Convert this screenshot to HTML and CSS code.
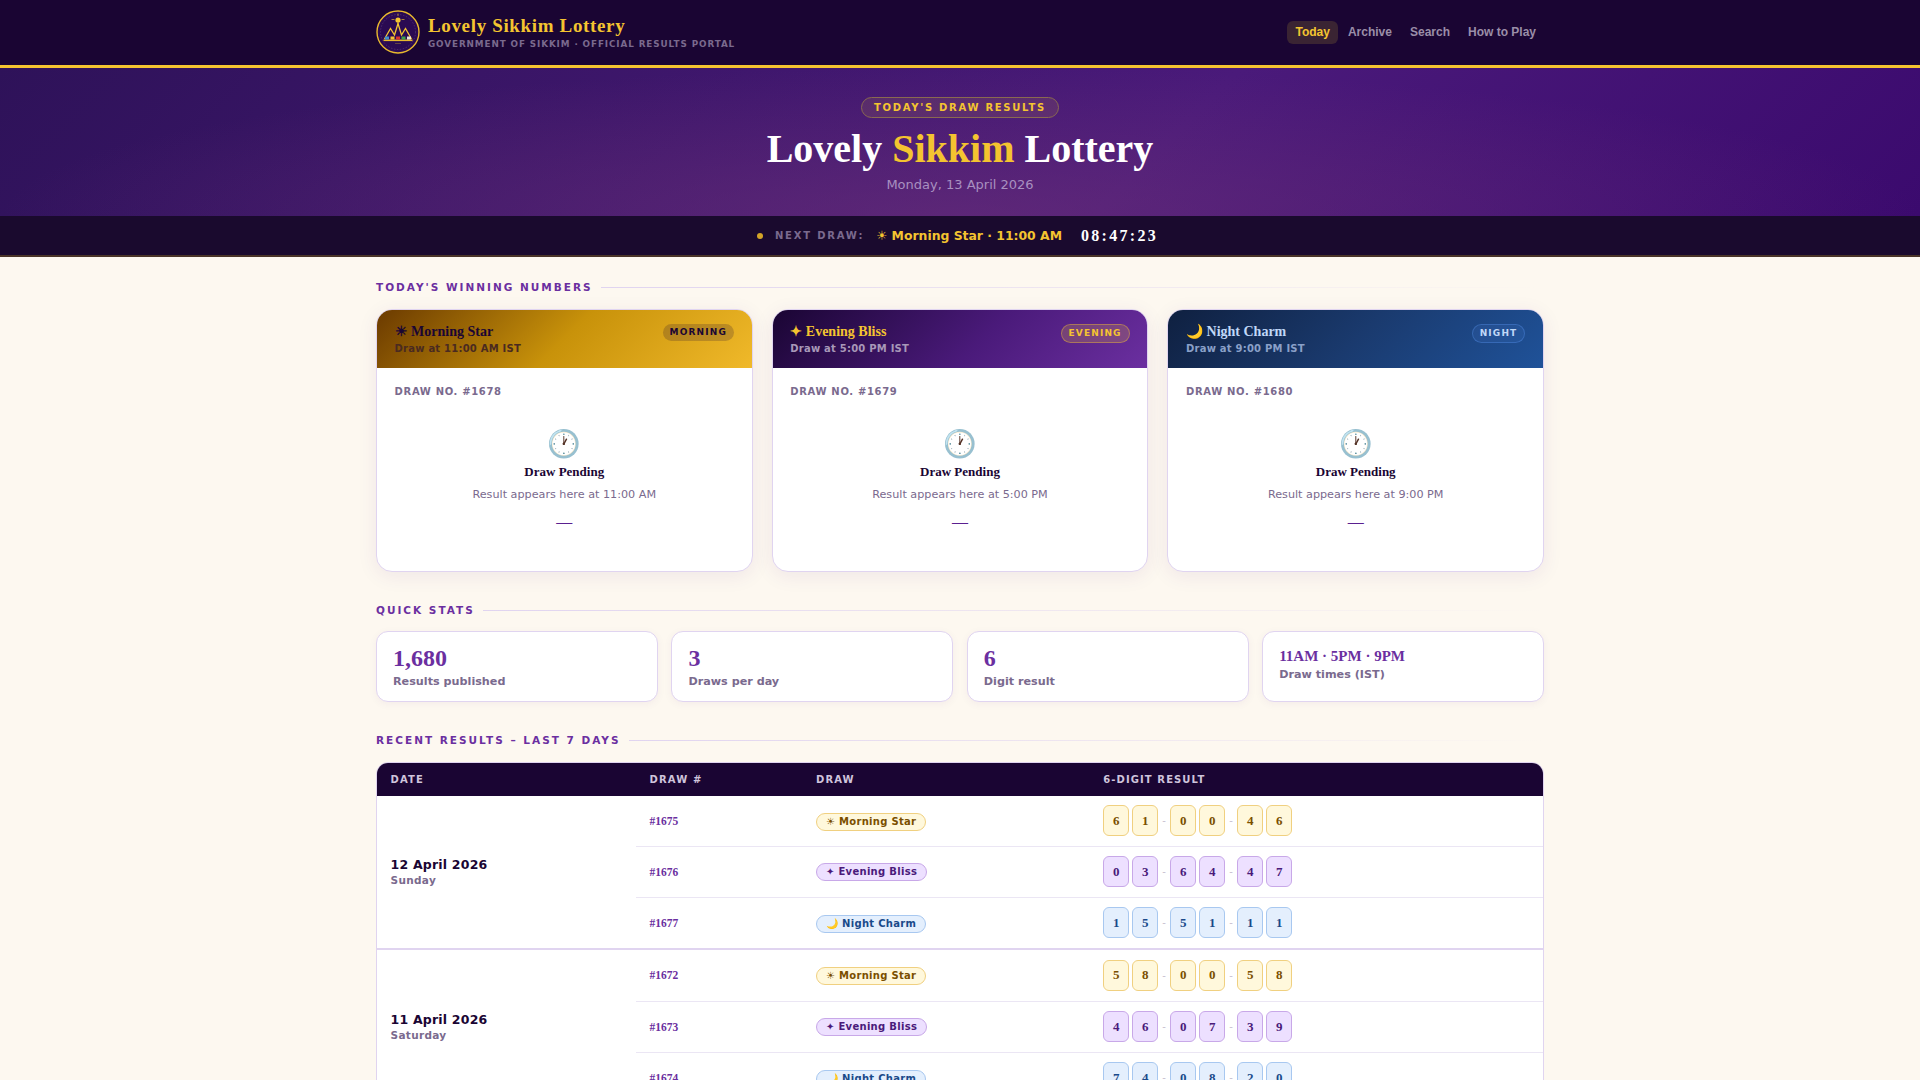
FILE: index.html
```html
<!DOCTYPE html>
<html lang="en">
<head>
<meta charset="utf-8">
<title>Lovely Sikkim Lottery</title>
<link rel="stylesheet" href="styles.css">
</head>
<body>
<header class="site-header">
  <div class="wrap header-row">
    <a class="brand">
      <svg class="logo" viewBox="0 0 44 44" width="44" height="44" aria-hidden="true">
        <circle cx="22" cy="22" r="21" fill="#2a0a52" stroke="#e8b92e" stroke-width="1.4"/>
        <circle cx="22" cy="22" r="17.5" fill="none" stroke="#6b4a8a" stroke-width=".5" stroke-dasharray="1.5 1.5"/>
        <circle cx="22" cy="10" r="2.6" fill="#f4c430"/>
        <path d="M22 3.500v2.500M15.500 9.500h3M25.500 9.500h3M22 12v2" stroke="#c9a030" stroke-width=".8" fill="none"/>
        <path d="M8.500 29 14.500 18.500 18.500 25 22 13.500 25.500 25 29.500 18.500 35.500 29" fill="none" stroke="#f4c430" stroke-width="1.3"/>
        <rect x="7.500" y="29.500" width="29" height="1.600" fill="#e8b92e"/>
        <rect x="9" y="26.500" width="4" height="3" fill="#3f8fd2"/>
        <rect x="14.500" y="26.500" width="4" height="3" fill="#f4c430"/>
        <rect x="20" y="26.500" width="4" height="3" fill="#d8342c"/>
        <rect x="25.500" y="26.500" width="4" height="3" fill="#3fa14a"/>
        <rect x="31" y="26.500" width="4" height="3" fill="#e9e4dc"/>
        <path d="M19 33.500h6" stroke="#8a6a3a" stroke-width=".6"/>
      </svg>
      <span class="brand-text">
        <span class="brand-name">Lovely Sikkim Lottery</span>
        <span class="brand-sub">GOVERNMENT OF SIKKIM · OFFICIAL RESULTS PORTAL</span>
      </span>
    </a>
    <nav class="nav">
      <a class="nav-link is-active">Today</a>
      <a class="nav-link">Archive</a>
      <a class="nav-link">Search</a>
      <a class="nav-link">How to Play</a>
    </nav>
  </div>
</header>

<section class="hero">
  <span class="hero-badge">TODAY'S DRAW RESULTS</span>
  <h1 class="hero-title">Lovely <span class="gold">Sikkim</span> Lottery</h1>
  <p class="hero-date">Monday, 13 April 2026</p>
</section>

<div class="next-bar">
  <span class="dot"></span>
  <span class="next-label">NEXT DRAW:</span>
  <span class="next-name">☀ Morning Star · 11:00 AM</span>
  <span class="next-time">08:47:23</span>
</div>

<main class="wrap main">
  <h2 class="section-title"><span>TODAY'S WINNING NUMBERS</span></h2>
  <div class="cards">
    <article class="card">
      <div class="card-head head-morning">
        <div>
          <div class="card-name">☀ Morning Star</div>
          <div class="card-time">Draw at 11:00 AM IST</div>
        </div>
        <span class="tag tag-morning">MORNING</span>
      </div>
      <div class="card-body">
        <div class="draw-no">DRAW NO. #1678</div>
        <div class="pending">
          <div class="clock">🕐</div>
          <div class="pending-title">Draw Pending</div>
          <div class="pending-sub">Result appears here at 11:00 AM</div>
          <div class="pending-dash">—</div>
        </div>
      </div>
    </article>
    <article class="card">
      <div class="card-head head-evening">
        <div>
          <div class="card-name name-evening">✦ Evening Bliss</div>
          <div class="card-time time-evening">Draw at 5:00 PM IST</div>
        </div>
        <span class="tag tag-evening">EVENING</span>
      </div>
      <div class="card-body">
        <div class="draw-no">DRAW NO. #1679</div>
        <div class="pending">
          <div class="clock">🕐</div>
          <div class="pending-title">Draw Pending</div>
          <div class="pending-sub">Result appears here at 5:00 PM</div>
          <div class="pending-dash">—</div>
        </div>
      </div>
    </article>
    <article class="card">
      <div class="card-head head-night">
        <div>
          <div class="card-name name-night">🌙 Night Charm</div>
          <div class="card-time time-night">Draw at 9:00 PM IST</div>
        </div>
        <span class="tag tag-night">NIGHT</span>
      </div>
      <div class="card-body">
        <div class="draw-no">DRAW NO. #1680</div>
        <div class="pending">
          <div class="clock">🕐</div>
          <div class="pending-title">Draw Pending</div>
          <div class="pending-sub">Result appears here at 9:00 PM</div>
          <div class="pending-dash">—</div>
        </div>
      </div>
    </article>
  </div>

  <h2 class="section-title"><span>QUICK STATS</span></h2>
  <div class="stats">
    <div class="stat"><div class="stat-value">1,680</div><div class="stat-label">Results published</div></div>
    <div class="stat"><div class="stat-value">3</div><div class="stat-label">Draws per day</div></div>
    <div class="stat"><div class="stat-value">6</div><div class="stat-label">Digit result</div></div>
    <div class="stat"><div class="stat-value stat-small">11AM · 5PM · 9PM</div><div class="stat-label">Draw times (IST)</div></div>
  </div>

  <h2 class="section-title"><span>RECENT RESULTS – LAST 7 DAYS</span></h2>
  <div class="table-box">
    <table class="results">
      <colgroup><col class="c-date"><col class="c-no"><col class="c-draw"><col></colgroup>
      <thead>
        <tr><th>DATE</th><th>DRAW #</th><th>DRAW</th><th>6-DIGIT RESULT</th></tr>
      </thead>
      <tbody class="day">
        <tr>
          <td class="date-cell" rowspan="3"><div class="date-main">12 April 2026</div><div class="date-day">Sunday</div></td>
          <td class="no">#1675</td>
          <td><span class="pill pill-m">☀ Morning Star</span></td>
          <td><div class="nums n-m"><b>6</b><b>1</b><i>-</i><b>0</b><b>0</b><i>-</i><b>4</b><b>6</b></div></td>
        </tr>
        <tr>
          <td class="no">#1676</td>
          <td><span class="pill pill-e">✦ Evening Bliss</span></td>
          <td><div class="nums n-e"><b>0</b><b>3</b><i>-</i><b>6</b><b>4</b><i>-</i><b>4</b><b>7</b></div></td>
        </tr>
        <tr>
          <td class="no">#1677</td>
          <td><span class="pill pill-n">🌙 Night Charm</span></td>
          <td><div class="nums n-n"><b>1</b><b>5</b><i>-</i><b>5</b><b>1</b><i>-</i><b>1</b><b>1</b></div></td>
        </tr>
      </tbody>
      <tbody class="day">
        <tr>
          <td class="date-cell" rowspan="3"><div class="date-main">11 April 2026</div><div class="date-day">Saturday</div></td>
          <td class="no">#1672</td>
          <td><span class="pill pill-m">☀ Morning Star</span></td>
          <td><div class="nums n-m"><b>5</b><b>8</b><i>-</i><b>0</b><b>0</b><i>-</i><b>5</b><b>8</b></div></td>
        </tr>
        <tr>
          <td class="no">#1673</td>
          <td><span class="pill pill-e">✦ Evening Bliss</span></td>
          <td><div class="nums n-e"><b>4</b><b>6</b><i>-</i><b>0</b><b>7</b><i>-</i><b>3</b><b>9</b></div></td>
        </tr>
        <tr>
          <td class="no">#1674</td>
          <td><span class="pill pill-n">🌙 Night Charm</span></td>
          <td><div class="nums n-n"><b>7</b><b>4</b><i>-</i><b>0</b><b>8</b><i>-</i><b>2</b><b>0</b></div></td>
        </tr>
      </tbody>
    </table>
  </div>
</main>
</body>
</html>
```
FILE: styles.css
```css
* { box-sizing: border-box; margin: 0; padding: 0; }
html, body { height: 100%; overflow: hidden; }
body {
  background: #fdf8f0;
  color: #1a0533;
  font-family: "DejaVu Sans", sans-serif;
}
.wrap { width: 1200px; margin: 0 auto; padding: 0 16px; }

.site-header { background: #1a0533; border-bottom: 3px solid #f4c430; height: 68px; }
.header-row { height: 64px; display: flex; align-items: center; justify-content: space-between; }
.brand { display: flex; align-items: center; gap: 8px; }
.logo { display: block; }
.brand-text { display: flex; flex-direction: column; }
.brand-name {
  font-family: "Liberation Serif", serif;
  font-weight: 700;
  font-size: 19px;
  line-height: 24px;
  letter-spacing: .65px;
  color: #f4c430;
}
.brand-sub {
  font-size: 8.800px;
  font-weight: 700;
  line-height: 13px;
  letter-spacing: .9px;
  color: #7a6a8e;
}
.nav { display: flex; gap: 2px; }
.nav-link {
  font-family: "Liberation Sans", sans-serif;
  font-weight: 700;
  font-size: 12px;
  line-height: 14px;
  color: #9a8ea8;
  padding: 4px 8px;
  height: 23px;
  display: flex;
  align-items: center;
  border-radius: 6px;
}
.nav-link.is-active { color: #f4c430; background: #3a2433; }

.hero {
  height: 148px;
  padding-top: 28px;
  text-align: center;
  background:
    radial-gradient(ellipse 50% 100% at 50% 100%, rgba(110, 50, 120, .55), transparent),
    linear-gradient(135deg, #2e1259 0%, #4a1a7a 60%, #3b0a6e 100%);
}
.hero-badge {
  display: inline-block;
  height: 21px;
  line-height: 19px;
  padding: 0 12px;
  border: 1px solid #8a6a50;
  border-radius: 20px;
  background: rgba(244, 196, 48, .1);
  color: #f4c430;
  font-size: 10px;
  font-weight: 700;
  letter-spacing: 1.700px;
}
.hero-title {
  font-family: "Liberation Serif", serif;
  font-weight: 700;
  font-size: 40px;
  line-height: 50px;
  color: #fff;
  margin-top: 6px;
}
.gold { color: #f4c430; }
.hero-date { font-size: 13px; line-height: 16px; color: #a890c0; margin-top: 3px; }

.next-bar {
  height: 41px;
  background: #1a0a2e;
  border-bottom: 2px solid #4a3428;
  display: flex;
  align-items: center;
  justify-content: center;
}
.dot { width: 6px; height: 6px; border-radius: 50%; background: #d4a428; margin-right: 12px; }
.next-label { font-size: 10px; font-weight: 700; letter-spacing: 1.800px; color: #7a6a8e; margin-right: 12px; }
.next-name { font-size: 12.400px; font-weight: 700; color: #f4c430; margin-right: 19px; }
.next-time { font-family: "Liberation Serif", serif; font-size: 16px; font-weight: 700; letter-spacing: 2.300px; color: #fff; margin-right: 5px; }

.section-title {
  display: flex;
  align-items: center;
  gap: 8px;
  font-size: 10.500px;
  font-weight: 700;
  letter-spacing: 2px;
  color: #6b2fa0;
  line-height: 14px;
}
.section-title::after {
  content: "";
  flex: 1;
  height: 1px;
  background: linear-gradient(90deg, #e0d4f0, rgba(224, 212, 240, 0));
}
.main { padding-top: 23px; }
.cards { display: grid; grid-template-columns: repeat(3, 1fr); gap: 19.200px; margin: 15px 0 31px; }
.card {
  background: #fff;
  border: 1px solid #e0d4f0;
  border-radius: 16px;
  overflow: hidden;
  height: 263px;
  box-shadow: 0 4px 20px rgba(74, 26, 122, .08);
}
.card-head {
  height: 58px;
  padding: 13px 17.600px 0;
  display: flex;
  justify-content: space-between;
  align-items: flex-start;
}
.head-morning { background: linear-gradient(135deg, #6b3a00, #c8920a 50%, #f0b92a); }
.head-evening { background: linear-gradient(135deg, #1a0533, #4a1a7a 55%, #6b2fa0); }
.head-night { background: linear-gradient(135deg, #0f2040, #1a3a6e 50%, #1f5299); }
.card-name { font-family: "Liberation Serif", serif; font-size: 14px; font-weight: 700; line-height: 18px; color: #1a0533; }
.card-time { font-size: 10px; font-weight: 700; line-height: 14px; letter-spacing: .22px; color: #4a2a20; margin-top: 1px; }
.name-evening { color: #f4c430; }
.time-evening { color: #a898b8; }
.name-night { color: #c0d8f8; }
.time-night { color: #8aa0c8; }
.tag { font-size: 9px; font-weight: 700; letter-spacing: 1.150px; line-height: 15px; padding: 1px 7px; border-radius: 10px; margin-top: 1px; }
.tag-morning { background: rgba(26, 5, 51, .2); color: #1a0533; }
.tag-evening { background: rgba(244, 196, 48, .2); border: 1px solid rgba(244, 196, 48, .4); color: #f4c430; }
.tag-night { background: rgba(100, 160, 255, .1); border: 1px solid rgba(100, 160, 255, .3); color: #c0d8f8; }
.card-body { padding: 17px 17.600px 0; }
.draw-no { font-size: 10px; font-weight: 700; letter-spacing: .65px; line-height: 14px; color: #7a6a8e; }
.pending { text-align: center; margin-top: 28px; }
.clock { font-size: 27px; line-height: 34px; }
.pending-title { font-family: "Liberation Serif", serif; font-weight: 700; font-size: 13px; line-height: 17px; margin-top: 2px; }
.pending-sub { font-size: 11.200px; line-height: 14px; color: #7a6a8e; margin-top: 8px; }
.pending-dash { font-family: "Liberation Serif", serif; font-size: 16px; line-height: 18px; color: #5a2090; margin-top: 11px; }

.stats { display: grid; grid-template-columns: repeat(4, 1fr); gap: 13.600px; margin: 14px 0 31px; }
.stat {
  height: 71px;
  background: #fff;
  border: 1px solid #e0d4f0;
  border-radius: 12px;
  padding: 13px 16px 0;
  box-shadow: 0 2px 8px rgba(74, 26, 122, .05);
}
.stat-value { font-family: "Liberation Serif", serif; font-weight: 700; font-size: 24px; line-height: 27px; color: #6b2fa0; }
.stat-small { font-size: 15px; line-height: 20px; margin-top: 1px; }
.stat-label { font-size: 11.200px; font-weight: 700; line-height: 14px; color: #7a6a8e; margin-top: 3px; }
.stat-small + .stat-label { margin-top: 2px; }

.table-box {
  margin-top: 15px;
  background: #fff;
  border: 1px solid #e0d4f0;
  border-radius: 12px;
  overflow: hidden;
}
.results { width: 100%; border-collapse: collapse; table-layout: fixed; }
.c-date { width: 259px; }
.c-no { width: 166.400px; }
.c-draw { width: 287.200px; }
.results th {
  height: 33px;
  background: #1a0533;
  color: #cfc4dc;
  font-size: 10px;
  font-weight: 700;
  letter-spacing: 1.100px;
  text-align: left;
  padding: 0 13.600px;
}
.results td { height: 51px; padding: 0 13.600px; border-top: 1px solid #ebe6f4; vertical-align: middle; }
.results tr:first-child td { border-top: 0; }
.results .date-cell { border-top: 0; }
.day + .day { border-top: 2px solid #e0d4f0; }
.day:first-of-type tr:first-child td { height: 50px; }
.day:first-of-type tr:last-child td { height: 52px; }
.day + .day tr:first-child td { height: 52px; }
.day + .day .date-cell { padding-top: 2px; }
.date-main { font-size: 12.500px; font-weight: 700; line-height: 16px; color: #1a0533; letter-spacing: .2px; }
.date-day { font-size: 10.500px; font-weight: 700; line-height: 15px; color: #7a6a8e; letter-spacing: .3px; }
.no { font-family: "Liberation Serif", serif; font-size: 11.500px; font-weight: 700; color: #6b2fa0; }
.pill {
  display: inline-block;
  vertical-align: middle;
  height: 18px;
  line-height: 15px;
  padding: 0 9px;
  border-radius: 20px;
  font-size: 10px;
  font-weight: 700;
  letter-spacing: .3px;
  border: 1px solid;
  white-space: nowrap;
}
.pill-m { background: #fff8dc; border-color: #f0d080; color: #7a4f00; }
.pill-e { background: #ede0ff; border-color: #c8a8e8; color: #4a1a7a; }
.pill-n { background: #e4effd; border-color: #a8c8f0; color: #1a4a8a; }
.nums { display: flex; align-items: center; gap: 3px; }
.nums b {
  width: 26px;
  height: 31px;
  display: flex;
  align-items: center;
  justify-content: center;
  border: 1px solid;
  border-radius: 6px;
  font-family: "Liberation Serif", serif;
  font-size: 13px;
  font-weight: 700;
}
.nums i { width: 6px; text-align: center; font-style: normal; font-size: 10px; color: #c8c0d0; }
.n-m b { background: #fff8dc; border-color: #f0d080; color: #7a4f00; }
.n-e b { background: #ede0ff; border-color: #c8a8e8; color: #4a1a7a; }
.n-n b { background: #e4effd; border-color: #a8c8f0; color: #1a4a8a; }
```
